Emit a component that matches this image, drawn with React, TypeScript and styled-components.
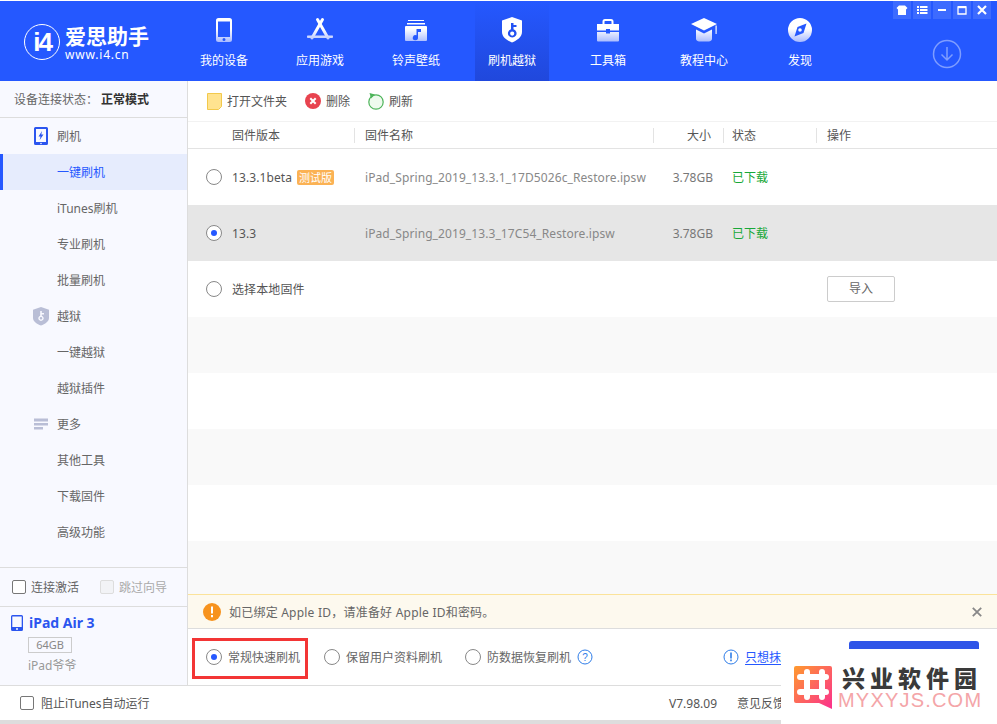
import React from 'react';
import styled, { createGlobalStyle } from 'styled-components';

const GlobalStyle = createGlobalStyle`
  html, body { margin: 0; padding: 0; background: #fff; }
  body { font-family: "Noto Sans", "Noto Sans CJK SC", sans-serif; font-size: 12px; color: #666; }
  * { box-sizing: border-box; }
`;

const BLUE = '#2558ff';

const Page = styled.div`
  position: relative;
  width: 997px;
  height: 724px;
  padding-top: 1px;
  overflow: hidden;
  display: flex;
  flex-direction: column;
`;

const Header = styled.header`
  position: relative;
  height: 80px;
  flex: none;
  background: ${BLUE};
  display: flex;
`;

const Logo = styled.div`
  width: 187px;
  flex: none;
  display: flex;
  align-items: center;
  gap: 5px;
  padding: 2px 0 0 24px;
  color: #fff;
`;

const LogoMark = styled.div`
  width: 36px;
  height: 36px;
  border: 1.5px solid #fff;
  border-radius: 50%;
  display: flex;
  align-items: center;
  justify-content: center;
  font: bold 26px/1 "Liberation Sans", sans-serif;
  letter-spacing: -2px;
`;

const LogoName = styled.div`
  font: bold 21px/24px "Noto Sans CJK SC", sans-serif;
`;

const LogoUrl = styled.div`
  font: 12px/14px "Noto Sans", sans-serif;
  letter-spacing: 0.8px;
  margin-top: 1px;
`;

const Nav = styled.nav`
  display: flex;
  gap: 22px;
`;

const NavItem = styled.div<{ $active?: boolean }>`
  width: 74px;
  height: 80px;
  padding-top: 13px;
  display: flex;
  flex-direction: column;
  align-items: center;
  color: #fff;
  background: ${(p) => (p.$active ? 'linear-gradient(#2558ff, #2048dc)' : 'transparent')};
  span {
    margin-top: 8px;
    line-height: 18px;
    white-space: nowrap;
  }
`;

const WindowButtons = styled.div`
  position: absolute;
  top: 0;
  right: 6px;
  display: flex;
  gap: 2px;
`;

const WindowButton = styled.div`
  width: 18px;
  height: 18px;
  background: #3d6bff;
  display: flex;
  align-items: center;
  justify-content: center;
`;

const DownloadSlot = styled.div`
  position: absolute;
  top: 38px;
  right: 35px;
  width: 30px;
  height: 30px;
`;

const Body = styled.div`
  flex: 1;
  min-height: 0;
  display: flex;
`;

const Sidebar = styled.aside`
  width: 188px;
  flex: none;
  background: #f8f9ff;
  border-right: 1px solid #ddd;
  display: flex;
  flex-direction: column;
`;

const StatusLine = styled.div`
  height: 37px;
  flex: none;
  padding-left: 14px;
  display: flex;
  align-items: center;
  border-bottom: 1px solid #ddd;
  b {
    color: #333;
    font-weight: 700;
    margin-left: 3px;
  }
`;

const Menu = styled.div`
  flex: 1;
`;

const MenuRow = styled.div<{ $active?: boolean }>`
  position: relative;
  height: 36px;
  padding-left: ${(p) => (p.$active ? '54px' : '57px')};
  display: flex;
  align-items: center;
  color: ${(p) => (p.$active ? BLUE : '#666')};
  background: ${(p) => (p.$active ? '#e6ecfd' : 'transparent')};
  border-left: ${(p) => (p.$active ? `3px solid ${BLUE}` : '0')};
  svg {
    position: absolute;
    left: 31px;
    top: 8px;
  }
`;

const CheckRow = styled.div`
  height: 40px;
  flex: none;
  border-top: 1px solid #ddd;
  border-bottom: 1px solid #ddd;
  padding-left: 12px;
  display: flex;
  align-items: center;
`;

const CheckBox = styled.i<{ $disabled?: boolean }>`
  width: 14px;
  height: 14px;
  flex: none;
  border-radius: 2px;
  border: 1px solid ${(p) => (p.$disabled ? '#ddd' : '#777')};
  background: ${(p) => (p.$disabled ? '#f2f3f6' : '#fff')};
`;

const CheckLabel = styled.span<{ $disabled?: boolean }>`
  margin-left: 5px;
  color: ${(p) => (p.$disabled ? '#aaa' : '#666')};
  margin-right: ${(p) => (p.$disabled ? '0' : '21px')};
`;

const Device = styled.div`
  height: 78px;
  flex: none;
  padding: 7px 0 0 11px;
`;

const DeviceName = styled.div`
  display: flex;
  align-items: center;
  gap: 6px;
  color: #2b55ef;
  font-size: 14px;
  font-weight: 700;
  line-height: 18px;
`;

const SizeTag = styled.div`
  width: 44px;
  height: 16px;
  margin: 5px 0 0 17px;
  border: 1px solid #ccc;
  color: #888;
  font-size: 11px;
  line-height: 14px;
  text-align: center;
`;

const DeviceOwner = styled.div`
  margin: 4px 0 0 17px;
  color: #999;
  line-height: 18px;
`;

const Main = styled.main`
  flex: 1;
  min-width: 0;
  display: flex;
  flex-direction: column;
`;

const Toolbar = styled.div`
  height: 41px;
  flex: none;
  padding-left: 19px;
  display: flex;
  align-items: center;
  border-bottom: 1px solid #f2f2f2;
`;

const ToolButton = styled.div`
  display: flex;
  align-items: center;
  gap: 5px;
  margin-right: 18px;
  color: #555;
`;

const columns = '166px 299px 70px 93px 1fr';

const TableHead = styled.div`
  height: 27px;
  flex: none;
  display: grid;
  grid-template-columns: ${columns};
  align-items: center;
  border-bottom: 1px solid #e3e3e3;
  color: #555;
`;

const HeadCell = styled.div<{ $pad: number; $right?: boolean; $first?: boolean }>`
  height: 15px;
  line-height: 15px;
  padding-left: ${(p) => p.$pad}px;
  border-left: ${(p) => (p.$first ? '0' : '1px solid #e3e3e3')};
  ${(p) => p.$right && 'padding-left: 0; padding-right: 12px; text-align: right;'}
`;

const Rows = styled.div`
  flex: 1;
  min-height: 0;
  display: flex;
  flex-direction: column;
`;

const Row = styled.div<{ $bg?: string; $grow?: boolean }>`
  height: 56px;
  flex: ${(p) => (p.$grow ? 1 : 'none')};
  display: grid;
  grid-template-columns: ${columns};
  align-items: center;
  background: ${(p) => p.$bg || '#fff'};
`;

const VersionCell = styled.div`
  padding-left: 18px;
  display: flex;
  align-items: center;
  color: #555;
`;

const Radio = styled.i<{ $on?: boolean }>`
  width: 16px;
  height: 16px;
  flex: none;
  border-radius: 50%;
  border: 1px solid #888;
  background: #fff;
  display: flex;
  align-items: center;
  justify-content: center;
  &::after {
    content: '';
    display: ${(p) => (p.$on ? 'block' : 'none')};
    width: 6px;
    height: 6px;
    border-radius: 50%;
    background: ${BLUE};
  }
`;

const VersionText = styled.span`
  margin-left: 10px;
  letter-spacing: 0.1px;
`;

const BetaTag = styled.span`
  margin-left: 5px;
  padding: 0 2px;
  height: 15px;
  line-height: 15px;
  border-radius: 2px;
  background: #fbb254;
  color: #fff;
  font-size: 11px;
`;

const NameCell = styled.div`
  padding-left: 11px;
  color: #888;
  white-space: nowrap;
  letter-spacing: 0.09px;
`;

const SizeCell = styled.div`
  padding-right: 10px;
  text-align: right;
  color: #777;
`;

const StateCell = styled.div`
  padding-left: 9px;
  color: #18a838;
`;

const ImportButton = styled.div`
  width: 68px;
  height: 26px;
  margin-left: 11px;
  border: 1px solid #ccc;
  border-radius: 2px;
  background: #fff;
  line-height: 24px;
  text-align: center;
  color: #666;
`;

const Notice = styled.div`
  height: 35px;
  flex: none;
  padding: 0 15px 0 15px;
  display: flex;
  align-items: center;
  background: #fdf9ee;
  border-top: 1px solid #fbe39a;
  border-bottom: 1px solid #ddd;
  color: #666;
  span {
    margin-left: 8px;
    flex: 1;
    letter-spacing: 0.22px;
  }
`;

const Options = styled.div`
  height: 56px;
  flex: none;
  padding-left: 4px;
  display: flex;
  align-items: center;
`;

const Option = styled.div<{ $marked?: boolean }>`
  display: flex;
  align-items: center;
  gap: 6px;
  color: #666;
  white-space: nowrap;
  ${(p) =>
    p.$marked
      ? 'width: 116px; height: 41px; margin-top: 3px; border: 3px solid #f33535; padding: 0 0 3px 11px; margin-right: 16px;'
      : 'margin-right: 23px;'}
`;

const HelpLink = styled.div`
  display: flex;
  align-items: center;
  gap: 6px;
  margin-left: -7px;
  padding-left: 114px;
  color: ${BLUE};
  white-space: nowrap;
  u {
    text-underline-offset: 2px;
  }
`;

const Footer = styled.footer`
  height: 35px;
  flex: none;
  padding-left: 20px;
  display: flex;
  align-items: center;
  color: #555;
  border-top: 1px solid #ddd;
`;

const FooterLabel = styled.span`
  margin-left: 7px;
  flex: 1;
`;

const Version = styled.span`
  margin-right: 20px;
`;

const Feedback = styled.span`
  width: 260px;
`;

const BottomStrip = styled.div`
  height: 4px;
  flex: none;
  background: #ddd;
`;

const FlashButton = styled.div`
  position: absolute;
  left: 849px;
  top: 641px;
  width: 130px;
  height: 40px;
  background: #2f55e8;
  border-radius: 3px 3px 0 0;
`;

const Watermark = styled.div`
  position: absolute;
  left: 781px;
  top: 649px;
  right: 0;
  bottom: 0;
  background: #fff;
  display: flex;
  padding: 17px 0 0 13px;
  gap: 6px;
`;

const WatermarkText = styled.div`
  margin-top: -1px;
`;

const WatermarkTitle = styled.div`
  color: #3a3a3a;
  font: 900 23px/24px "Noto Sans CJK SC", sans-serif;
  letter-spacing: 5px;
  margin-left: 4px;
`;

const WatermarkSub = styled.div`
  color: #f4a5a8;
  font: 20px/22px "Liberation Sans", sans-serif;
  letter-spacing: 1.2px;
`;

const Grad: React.FC<{ id: string }> = ({ id }) => (
  <defs>
    <linearGradient id={id} gradientUnits="userSpaceOnUse" x1="0" y1="4" x2="0" y2="28">
      <stop offset="0" stopColor="#fff" />
      <stop offset="0.45" stopColor="#fff" />
      <stop offset="1" stopColor="#a8baff" />
    </linearGradient>
  </defs>
);

const navIcons: React.ReactNode[] = [
  <svg width="30" height="30" viewBox="0 0 30 30" key="d">
    <Grad id="n0" />
    <path
      fill="url(#n0)"
      fillRule="evenodd"
      d="M9.5 4h11A2.5 2.5 0 0 1 23 6.500v19a2.500 2.500 0 0 1-2.500 2.500h-11A2.500 2.500 0 0 1 7 25.500v-19A2.500 2.500 0 0 1 9.500 4zM9 7.500V23h12V7.500zM15 24a1.500 1.500 0 1 0 0 3 1.500 1.500 0 0 0 0-3z"
    />
  </svg>,
  <svg width="30" height="30" viewBox="0 0 30 30" key="a">
    <Grad id="n1" />
    <g stroke="url(#n1)" strokeWidth="3" strokeLinecap="round" fill="none">
      <path d="M17.500 5.500L7 24" />
      <path d="M12.500 5.500L23 24" />
    </g>
    <path fill="url(#n1)" d="M3 21.500h24c.8 0 1 .5 1 1.200s-.4 1.300-1 1.300H3c-.7 0-1-.6-1-1.300s.3-1.200 1-1.200z" />
  </svg>,
  <svg width="30" height="30" viewBox="0 0 30 30" key="r">
    <Grad id="n2" />
    <path fill="url(#n2)" d="M7 6h16v1H7zM6 9h18v1.500H6z" />
    <path
      fill="url(#n2)"
      fillRule="evenodd"
      d="M5 12h20a1 1 0 0 1 1 1v13a1 1 0 0 1-1 1H5a1 1 0 0 1-1-1V13a1 1 0 0 1 1-1zm10.500 3v6.300a2.600 2.600 0 1 0 1.500 2.300V18h3v-3z"
    />
  </svg>,
  <svg width="30" height="30" viewBox="0 0 30 30" key="s">
    <path
      fill="#fff"
      fillRule="evenodd"
      d="M15 3l10 3.500v11.500c0 5-5 8.500-10 10.500C10 26.500 5 23 5 18V6.500zM14 9v6.200a4.300 4.300 0 1 0 2.500 0V13h3v-2h-3V9zm1.200 8.500a2.100 2.100 0 1 1 0 4.200 2.100 2.100 0 0 1 0-4.200z"
    />
  </svg>,
  <svg width="30" height="30" viewBox="0 0 30 30" key="t">
    <Grad id="n4" />
    <path fill="none" stroke="url(#n4)" strokeWidth="2" d="M10.500 10V7.500A1.500 1.500 0 0 1 12 6h6a1.500 1.500 0 0 1 1.500 1.500V10" />
    <path
      fill="url(#n4)"
      d="M4 10h22v6.500H17v-1.500h-4v1.500H4zM4 18h9v1.500h4V18h9v8.500a1 1 0 0 1-1 1H5a1 1 0 0 1-1-1z"
    />
  </svg>,
  <svg width="30" height="30" viewBox="0 0 30 30" key="c">
    <Grad id="n5" />
    <path fill="url(#n5)" d="M15 4l13 6-13 6.500L2 10z" />
    <path fill="url(#n5)" d="M7 15.500l8 4 8-4V25c0 1.500-2 2.500-3 2.500H10c-1 0-3-1-3-2.500z" />
    <path fill="url(#n5)" d="M26.500 11.500h1.200V20h-1.200z" />
  </svg>,
  <svg width="30" height="30" viewBox="0 0 30 30" key="f">
    <Grad id="n6" />
    <path
      fill="url(#n6)"
      fillRule="evenodd"
      d="M15 4a12 12 0 1 1 0 24 12 12 0 0 1 0-24zm6.500 5.500l-9 3.500-3 9.500 9-3.500zM15 14.200a1.800 1.800 0 1 1 0 3.600 1.800 1.800 0 0 1 0-3.600z"
    />
  </svg>,
];

const navLabels = ['我的设备', '应用游戏', '铃声壁纸', '刷机越狱', '工具箱', '教程中心', '发现'];

const windowIcons: React.ReactNode[] = [
  <svg width="12" height="12" viewBox="0 0 12 12" key="1">
    <path fill="#fff" d="M3 1.500h6L11.500 4 10 5.500V11H2V5.500L.5 4z" />
  </svg>,
  <svg width="12" height="12" viewBox="0 0 12 12" key="2">
    <path fill="#fff" d="M1 2h2v2H1zM4 2h7.500v2H4zM1 5h2v2H1zM4 5h7.500v2H4zM1 8h2v2H1zM4 8h7.500v2H4z" />
  </svg>,
  <svg width="12" height="12" viewBox="0 0 12 12" key="3">
    <path fill="#fff" d="M2 5h8v2H2z" />
  </svg>,
  <svg width="12" height="12" viewBox="0 0 12 12" key="4">
    <path fill="none" stroke="#fff" strokeWidth="1.300" d="M2 3h8v7H2z" />
    <path fill="#fff" d="M2 2h8v2.200H2z" />
  </svg>,
  <svg width="12" height="12" viewBox="0 0 12 12" key="5">
    <path stroke="#fff" strokeWidth="2.200" d="M2 2l8 8M10 2l-8 8" />
  </svg>,
];

const FlashIcon = () => (
  <svg width="20" height="20" viewBox="0 0 20 20">
    <path
      fill="#2b55ef"
      fillRule="evenodd"
      d="M4.500 1h11A1.500 1.500 0 0 1 17 2.500v15a1.500 1.500 0 0 1-1.500 1.500h-11A1.500 1.500 0 0 1 3 17.500v-15A1.500 1.500 0 0 1 4.500 1zM5 3v13h10V3zm5 13.700a.8.800 0 1 0 0 1.600.8.800 0 0 0 0-1.600z"
    />
    <path fill="#2b55ef" d="M11 5L7.500 10.500h2L8.700 14l3.800-5.500h-2.200z" />
  </svg>
);

const ShieldIcon = () => (
  <svg width="20" height="20" viewBox="0 0 20 20">
    <path
      fill="#b9bed6"
      fillRule="evenodd"
      d="M10 1l8 2.800v8.200c0 3.500-4 6-8 7.500-4-1.500-8-4-8-7.500V3.800zM9.200 5v4.700a2.700 2.700 0 1 0 1.600 0V8.500h2.200V7h-2.200V5zM10 11a1.300 1.300 0 1 1 0 2.600 1.300 1.300 0 0 1 0-2.600z"
    />
  </svg>
);

const MoreIcon = () => (
  <svg width="20" height="20" viewBox="0 0 20 20">
    <path fill="#b9bed6" d="M3 4.500h14v3H3zM3 9h14v2.500H3zM3 13h9v2.500H3z" />
  </svg>
);

const menu: { label: string; icon?: React.ReactNode; active?: boolean }[] = [
  { label: '刷机', icon: <FlashIcon /> },
  { label: '一键刷机', active: true },
  { label: 'iTunes刷机' },
  { label: '专业刷机' },
  { label: '批量刷机' },
  { label: '越狱', icon: <ShieldIcon /> },
  { label: '一键越狱' },
  { label: '越狱插件' },
  { label: '更多', icon: <MoreIcon /> },
  { label: '其他工具' },
  { label: '下载固件' },
  { label: '高级功能' },
];

const App: React.FC = () => (
  <Page>
    <GlobalStyle />
    <Header>
      <Logo>
        <LogoMark>i4</LogoMark>
        <div>
          <LogoName>爱思助手</LogoName>
          <LogoUrl>www.i4.cn</LogoUrl>
        </div>
      </Logo>
      <Nav>
        {navLabels.map((label, i) => (
          <NavItem key={label} $active={i === 3}>
            {navIcons[i]}
            <span>{label}</span>
          </NavItem>
        ))}
      </Nav>
      <WindowButtons>
        {windowIcons.map((icon, i) => (
          <WindowButton key={i}>{icon}</WindowButton>
        ))}
      </WindowButtons>
      <DownloadSlot>
        <svg width="30" height="30" viewBox="0 0 30 30" fill="none" stroke="#7f9dff" strokeWidth="1.500">
          <circle cx="15" cy="15" r="13.500" />
          <path d="M15 8v13M9.500 15.500L15 21l5.500-5.500" />
        </svg>
      </DownloadSlot>
    </Header>
    <Body>
      <Sidebar>
        <StatusLine>
          设备连接状态：<b>正常模式</b>
        </StatusLine>
        <Menu>
          {menu.map((m) => (
            <MenuRow key={m.label} $active={m.active}>
              {m.icon}
              {m.label}
            </MenuRow>
          ))}
        </Menu>
        <CheckRow>
          <CheckBox />
          <CheckLabel>连接激活</CheckLabel>
          <CheckBox $disabled />
          <CheckLabel $disabled>跳过向导</CheckLabel>
        </CheckRow>
        <Device>
          <DeviceName>
            <svg width="12" height="16" viewBox="0 0 12 16">
              <path
                fill="#2b55ef"
                fillRule="evenodd"
                d="M1.500 0h9A1.500 1.500 0 0 1 12 1.500v13a1.500 1.500 0 0 1-1.500 1.500h-9A1.500 1.500 0 0 1 0 14.500v-13A1.500 1.500 0 0 1 1.500 0zM1.300 1.500V12h9.400V1.500zM6 13a1 1 0 1 0 0 2 1 1 0 0 0 0-2z"
              />
            </svg>
            iPad Air 3
          </DeviceName>
          <SizeTag>64GB</SizeTag>
          <DeviceOwner>iPad爷爷</DeviceOwner>
        </Device>
      </Sidebar>
      <Main>
        <Toolbar>
          <ToolButton>
            <svg width="15" height="17" viewBox="0 0 15 17">
              <path fill="#ffe38f" stroke="#f2c94c" d="M.500.500h14v13l-3 3H.500z" />
            </svg>
            打开文件夹
          </ToolButton>
          <ToolButton>
            <svg width="16" height="16" viewBox="0 0 16 16">
              <circle cx="8" cy="8" r="8" fill="#e8434f" />
              <path stroke="#fff" strokeWidth="2" d="M5.300 5.300l5.400 5.400M10.700 5.300l-5.400 5.400" />
            </svg>
            删除
          </ToolButton>
          <ToolButton>
            <svg width="16" height="17" viewBox="0 0 16 17">
              <circle cx="8" cy="9" r="7.200" fill="#eefaee" stroke="#4db45a" strokeWidth="1.200" />
              <path fill="#4db45a" d="M1.500 0l5.500 1.500L3 5.500z" />
            </svg>
            刷新
          </ToolButton>
        </Toolbar>
        <TableHead>
          <HeadCell $first $pad={44}>固件版本</HeadCell>
          <HeadCell $pad={10}>固件名称</HeadCell>
          <HeadCell $pad={0} $right>大小</HeadCell>
          <HeadCell $pad={8}>状态</HeadCell>
          <HeadCell $pad={10}>操作</HeadCell>
        </TableHead>
        <Rows>
          <Row>
            <VersionCell>
              <Radio />
              <VersionText>13.3.1beta</VersionText>
              <BetaTag>测试版</BetaTag>
            </VersionCell>
            <NameCell>iPad_Spring_2019_13.3.1_17D5026c_Restore.ipsw</NameCell>
            <SizeCell>3.78GB</SizeCell>
            <StateCell>已下载</StateCell>
          </Row>
          <Row $bg="#e6e6e6">
            <VersionCell>
              <Radio $on />
              <VersionText>13.3</VersionText>
            </VersionCell>
            <NameCell>iPad_Spring_2019_13.3_17C54_Restore.ipsw</NameCell>
            <SizeCell>3.78GB</SizeCell>
            <StateCell>已下载</StateCell>
          </Row>
          <Row>
            <VersionCell>
              <Radio />
              <VersionText>选择本地固件</VersionText>
            </VersionCell>
            <div />
            <div />
            <div />
            <ImportButton>导入</ImportButton>
          </Row>
          <Row $bg="#f9f9f9" />
          <Row />
          <Row $bg="#f9f9f9" />
          <Row />
          <Row $bg="#f9f9f9" $grow />
        </Rows>
        <Notice>
          <svg width="18" height="18" viewBox="0 0 18 18">
            <circle cx="9" cy="9" r="9" fill="#f7931e" />
            <path fill="#fff" d="M8 3.500h2v7H8zM8 12h2v2.200H8z" />
          </svg>
          <span>如已绑定 Apple ID，请准备好 Apple ID和密码。</span>
          <svg width="10" height="10" viewBox="0 0 10 10">
            <path stroke="#888" strokeWidth="1.800" d="M.800.800l8.400 8.400M9.200.800L.800 9.200" />
          </svg>
        </Notice>
        <Options>
          <Option $marked>
            <Radio $on />
            常规快速刷机
          </Option>
          <Option>
            <Radio />
            保留用户资料刷机
          </Option>
          <Option>
            <Radio />
            防数据恢复刷机
            <svg width="16" height="16" viewBox="0 0 16 16" fill="none">
              <circle cx="8" cy="8" r="7" stroke="#2f7de8" />
              <text x="8" y="11.500" textAnchor="middle" fill="#2f7de8" fontSize="10" fontFamily="Liberation Sans">?</text>
            </svg>
          </Option>
          <HelpLink>
            <svg width="16" height="16" viewBox="0 0 16 16" fill="none">
              <circle cx="8" cy="8" r="7" stroke="#2f7de8" />
              <path fill="#2f7de8" d="M7.200 3.500h1.600v6H7.200zM7.200 10.500h1.600v1.800H7.200z" />
            </svg>
            <u>只想抹除数据</u>
          </HelpLink>
        </Options>
      </Main>
    </Body>
    <Footer>
      <CheckBox />
      <FooterLabel>阻止iTunes自动运行</FooterLabel>
      <Version>V7.98.09</Version>
      <Feedback>意见反馈</Feedback>
    </Footer>
    <BottomStrip />
    <FlashButton />
    <Watermark>
      <svg width="38" height="44" viewBox="0 0 38 44">
        <defs>
          <linearGradient id="wm" x1="0" y1="0" x2="1" y2="1">
            <stop offset="0" stopColor="#ff9a2e" />
            <stop offset="1" stopColor="#fb2f8e" />
          </linearGradient>
        </defs>
        <path fill="url(#wm)" d="M2 0h34a2 2 0 0 1 2 2v41l-13-6H2a2 2 0 0 1-2-2V2a2 2 0 0 1 2-2z" />
        <g stroke="#fff" strokeWidth="6" strokeLinecap="round">
          <path d="M13 6v25M28 6v25M6 11h26M6 26h26" />
        </g>
      </svg>
      <WatermarkText>
        <WatermarkTitle>兴业软件园</WatermarkTitle>
        <WatermarkSub>MYXYJS.COM</WatermarkSub>
      </WatermarkText>
    </Watermark>
  </Page>
);

export default App;
